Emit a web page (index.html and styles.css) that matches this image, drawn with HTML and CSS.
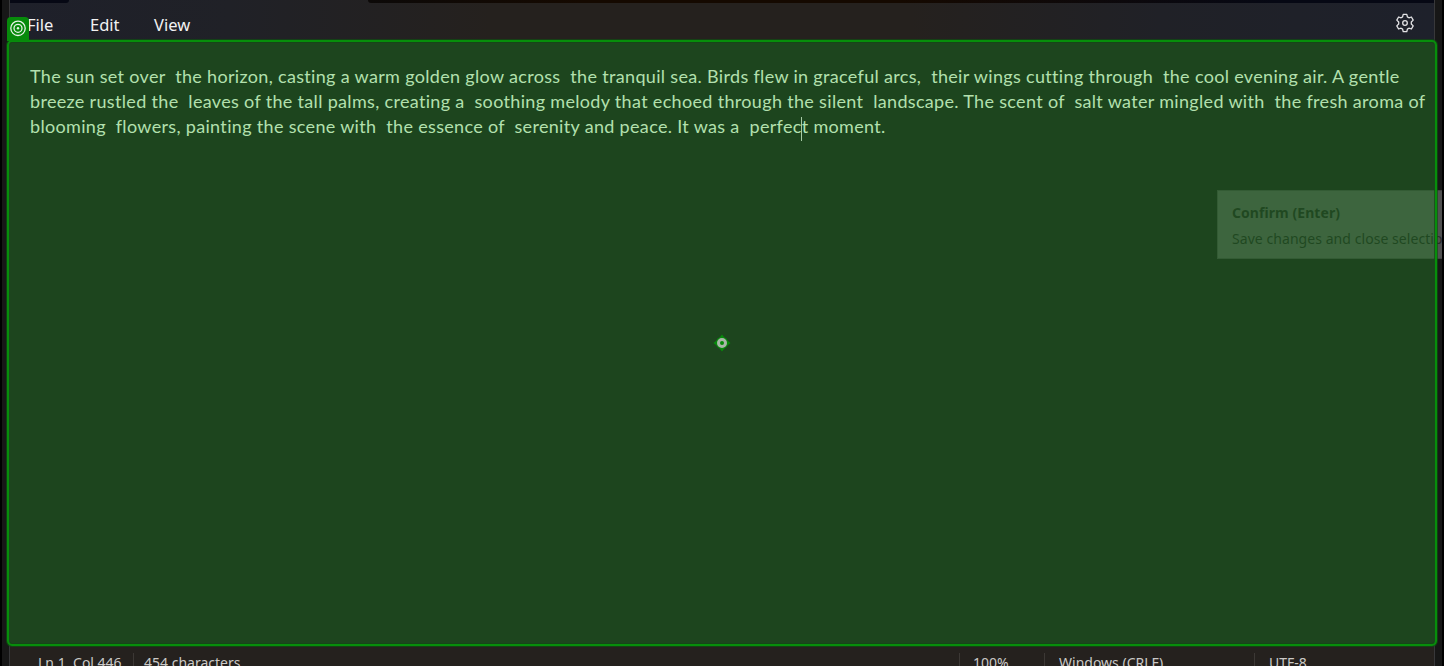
FILE: index.html
```html
<!DOCTYPE html>
<html lang="en">
<head>
<meta charset="utf-8">
<title>Notepad</title>
<link rel="stylesheet" href="styles.css">
</head>
<body>
<div class="desktop">
  <main class="window">
    <div class="tabs"><span class="tabs-before"></span><span class="tabs-after"></span></div>
    <nav class="menu">
      <span class="menu-file">File</span><span class="menu-edit">Edit</span><span class="menu-view">View</span>
      <svg class="gear" width="20" height="20" viewBox="0 0 20 20" fill="none" stroke="#e4e4e6" stroke-width="1.3" stroke-linejoin="round">
        <path d="M8.2 1.4h3.6l.6 2.5 1.5.9 2.5-.8 1.8 3.1-1.9 1.9v2l1.9 1.9-1.8 3.1-2.5-.8-1.5.9-.6 2.5H8.2l-.6-2.5-1.5-.9-2.5.8-1.8-3.1L3.700 11v-2L1.800 7.100 3.600 4l2.500.8 1.500-.9z"/>
        <circle cx="10" cy="10" r="2.300"/>
      </svg>
    </nav>
    <div class="editor"></div>
    <footer class="status">
      <span class="cell position">Ln 1, Col 446</span>
      <span class="cell count">454 characters</span>
      <span class="cell zoom">100%</span>
      <span class="cell ending">Windows (CRLF)</span>
      <span class="cell encoding">UTF-8</span>
    </footer>
  </main>
  <aside class="tooltip">
    <strong>Confirm (Enter)</strong>
    <span>Save changes and close selection</span>
  </aside>
  <section class="selection">
    <div class="document">
      <div class="line">The sun set over  the horizon, casting a warm golden glow across  the tranquil sea. Birds flew in graceful arcs,  their wings cutting through  the cool evening air. A gentle</div>
      <div class="line">breeze rustled the  leaves of the tall palms, creating a  soothing melody that echoed through the silent  landscape. The scent of  salt water mingled with  the fresh aroma of</div>
      <div class="line">blooming  flowers, painting the scene with  the essence of  serenity and peace. It was a  perfec<i class="caret"></i>t moment.</div>
    </div>
  </section>
  <svg class="badge" width="22" height="24" viewBox="0 0 22 24" fill="none">
    <path d="M0 24V4a4 4 0 0 1 4-4h14a4 4 0 0 1 4 4v20z" fill="#078a0b"/>
    <g stroke="#e7f3e7" stroke-width="1.300"><circle cx="11" cy="11.300" r="7.200"/><circle cx="11" cy="11.300" r="4"/></g>
    <circle cx="11" cy="11.300" r="1.200" fill="#e7f3e7"/>
  </svg>
  <svg class="target" width="18" height="18" viewBox="0 0 18 18">
    <path d="M9 .5 11.200 3.300A6 6 0 0 1 14.700 6.800L17.500 9l-2.800 2.200a6 6 0 0 1-3.500 3.500L9 17.500l-2.200-2.800a6 6 0 0 1-3.500-3.500L.5 9l2.800-2.200a6 6 0 0 1 3.500-3.500z" fill="#078a0b"/>
    <circle cx="9" cy="9" r="3.500" fill="none" stroke="#a9b6a9" stroke-width="3"/>
  </svg>
</div>
</body>
</html>
```
FILE: styles.css
```css
body { margin: 0; overflow: hidden; background: #000; }
.desktop {
  position: relative;
  box-sizing: border-box;
  width: 1444px;
  height: 666px;
  padding: 0 7px;
  border: solid #000;
  border-width: 0 2px;
  background: #171717;
  overflow: hidden;
  font-family: "Noto Sans", "Open Sans", sans-serif;
}
.window {
  display: flex;
  flex-direction: column;
  box-sizing: border-box;
  width: 1426px;
  height: 666px;
  border: solid #38383a;
  border-width: 0 1px;
  background: linear-gradient(90deg, #1e202a 0, #202127 220px, #25211e 480px, #25211e 900px, #202127 1150px, #1e212b 100%);
}
.tabs { display: flex; justify-content: space-between; flex: 0 0 3px; }
.tabs-before { width: 59px; border-radius: 0 0 3px 0; background: #060814; }
.tabs-after { width: 1066px; border-radius: 0 0 0 3px; background: linear-gradient(90deg, #0c0908, #150900 20%, #150900 50%, #060814 85%); }
.menu { display: flex; flex: none; height: 37px; color: #f2f2f3; font-size: 16.5px; line-height: 43px; white-space: nowrap; }
.menu-file { width: 63px; padding-left: 17px; }
.menu-edit { width: 64px; }
.menu-view { width: 60px; }
.gear { margin: 10px 19px 0 auto; }
.editor { flex: 0 0 606px; background: #262626; }
.status { display: flex; flex: 0 0 20px; padding-top: 7px; box-sizing: border-box; background: #25211e; color: #cbc9c7; font-size: 14px; line-height: 19px; white-space: pre; }
.cell { box-sizing: border-box; height: 20px; flex: none; border-right: 1px solid #3c3835; }
.position { width: 124px; padding-left: 28px; }
.count { width: 826px; padding-left: 10px; }
.zoom { width: 85px; padding-left: 13px; }
.ending { width: 210px; padding-left: 14px; }
.encoding { width: 150px; padding-left: 14px; border: 0; }
.tooltip {
  position: absolute;
  left: 1215px;
  top: 190px;
  box-sizing: border-box;
  width: 225px;
  height: 69px;
  padding: 12px 0 0 14px;
  border: 1px solid #424242;
  border-right: 0;
  background: #505050;
  color: #2a2a2a;
  font-size: 14px;
  line-height: 20px;
  letter-spacing: .06px;
  white-space: nowrap;
  overflow: hidden;
}
.tooltip strong, .tooltip span { display: block; }
.tooltip span { margin-top: 6px; }
.selection {
  position: absolute;
  left: 5px;
  top: 40px;
  box-sizing: border-box;
  width: 1430px;
  height: 606px;
  border: 2px solid #078e0b;
  border-radius: 5px;
  background: rgba(4, 171, 9, .24);
  box-shadow: inset 0 0 0 1px rgba(20, 70, 22, .7), 0 0 0 1px rgba(14, 80, 17, .7);
}
.document { padding: 22px 0 0 21px; color: #b3e0ae; font: 18px/25px Lato, sans-serif; letter-spacing: .325px; }
.line { height: 25px; white-space: pre; }
.caret { display: inline-block; width: 1px; height: 24px; margin: -6px 0 -5px -1px; vertical-align: -3px; background: #a7cba5; }
.badge { position: absolute; left: 5px; top: 17px; }
.target { position: absolute; left: 711px; top: 334px; }
```
